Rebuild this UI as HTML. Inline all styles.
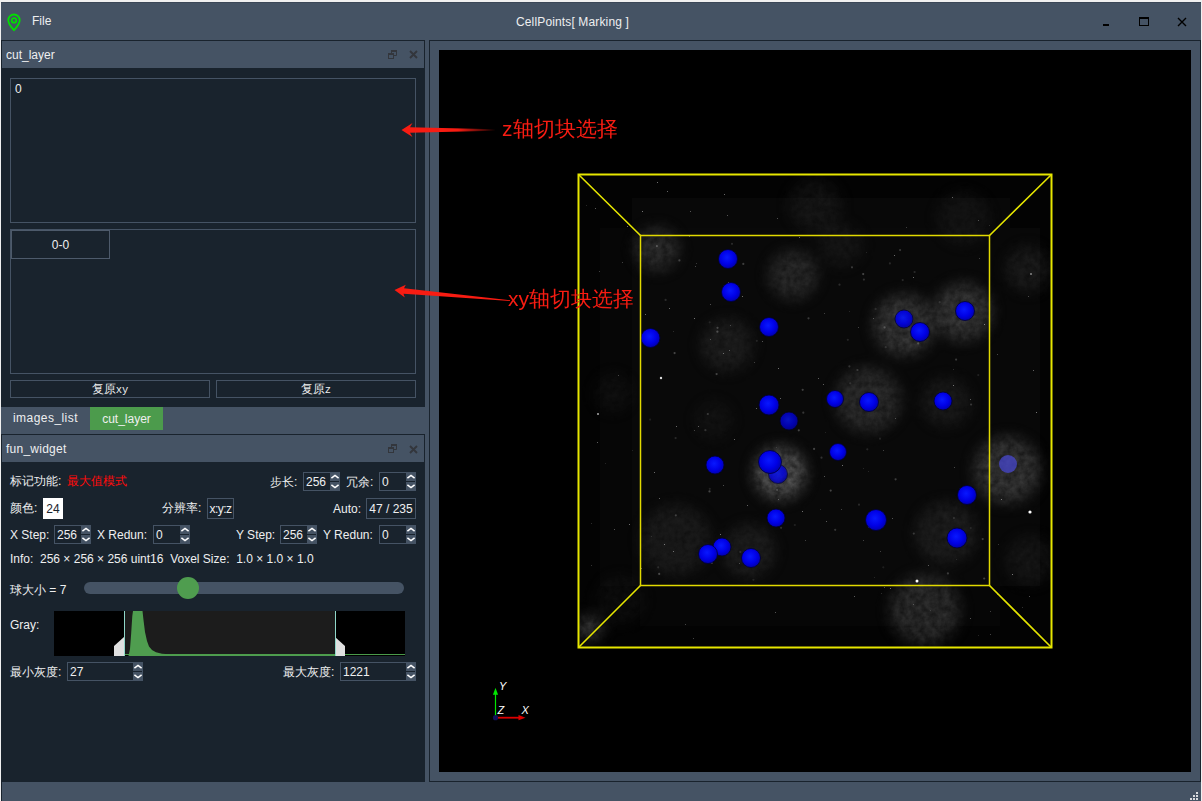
<!DOCTYPE html>
<html><head><meta charset="utf-8">
<style>
*{margin:0;padding:0;box-sizing:border-box}
html,body{width:1202px;height:801px;overflow:hidden;background:#f0f0f0}
body{position:relative;font-family:"Liberation Sans",sans-serif;font-size:12px;color:#eeeff0}
.a{position:absolute}
.t{position:absolute;white-space:nowrap;line-height:14px}
.bx{position:absolute;border:1px solid #455364}
.spin{position:absolute;border:1px solid #455364;background:#19232d}
.spin .btn{position:absolute;right:-1px;top:-1px;bottom:-1px;width:10px;background:#455364}
.spin .v{position:absolute;left:2px;top:2px;line-height:14px}
</style></head><body>
<!-- window frame -->
<div class="a" style="left:1px;top:2px;width:1200px;height:799px;background:#455364"></div>
<div class="a" style="left:1px;top:2px;width:1200px;height:1px;background:#3b4757"></div>
<div class="a" style="left:1px;top:40px;width:1px;height:367px;background:#19232d"></div><div class="a" style="left:1px;top:434px;width:1px;height:367px;background:#19232d"></div>

<!-- title bar -->
<svg class="a" style="left:6px;top:12px" width="17" height="20" viewBox="0 0 17 20">
  <path d="M8 18.3 C7 17 2.3 12.5 2.3 8.2 A5.7 5.7 0 0 1 13.7 8.2 C13.7 12.5 9 17 8 18.3 Z" fill="none" stroke="#00e000" stroke-width="1.8" stroke-linejoin="round"/>
  <circle cx="8" cy="8.4" r="2.3" fill="none" stroke="#00e000" stroke-width="1.7"/>
</svg>
<div class="t" style="left:32px;top:14px">File</div>
<div class="t" style="left:516px;top:15px;letter-spacing:0.14px">CellPoints[ Marking ]</div>
<div class="a" style="left:1103px;top:24px;width:6px;height:2px;background:#000"></div>
<div class="a" style="left:1139px;top:17px;width:10px;height:9px;border:1px solid #000;border-top-width:2px"></div>
<svg class="a" style="left:1177px;top:17px" width="10" height="10" viewBox="0 0 10 10"><path d="M1 1 L9 9 M9 1 L1 9" stroke="#000" stroke-width="1.4"/></svg>

<!-- left dock cut_layer -->
<div class="a" style="left:1px;top:40px;width:424px;height:367px;background:#19232d"></div>
<div class="a" style="left:2px;top:41px;width:422px;height:27px;background:#455364"></div>
<div class="t" style="left:6px;top:48px">cut_layer</div>
<svg class="a" style="left:388px;top:50px" width="9" height="9" viewBox="0 0 9 9"><path d="M3.5 3V.5h5v5H6" fill="none" stroke="#33363c" stroke-width="1"/><rect x="3" y="0" width="6" height="2" fill="#33363c"/><rect x=".5" y="3.5" width="5" height="5" fill="none" stroke="#33363c" stroke-width="1"/><rect x="0" y="3" width="6" height="2" fill="#33363c"/></svg>
<svg class="a" style="left:409px;top:50px" width="9" height="9" viewBox="0 0 9 9"><path d="M1 1L8 8M8 1L1 8" stroke="#33363c" stroke-width="1.9"/></svg>

<div class="bx" style="left:10px;top:78px;width:406px;height:145px"></div>
<div class="t" style="left:15px;top:82px">0</div>
<div class="bx" style="left:10px;top:229px;width:406px;height:145px"></div>
<div class="bx" style="left:11px;top:230px;width:99px;height:29px;border-color:#4d5a6b"></div>
<div class="t" style="left:11px;top:238px;width:99px;text-align:center">0-0</div>
<div class="bx" style="left:10px;top:380px;width:200px;height:18px"></div>
<div class="t" style="left:10px;top:382px;width:200px;text-align:center">复原<span style="font-family:'Liberation Mono',monospace;font-size:10.5px">xy</span></div>
<div class="bx" style="left:216px;top:380px;width:200px;height:18px"></div>
<div class="t" style="left:216px;top:382px;width:200px;text-align:center">复原<span style="font-family:'Liberation Mono',monospace;font-size:10.5px">z</span></div>

<!-- tab bar -->
<div class="t" style="left:13px;top:411px;letter-spacing:0.45px">images_list</div>
<div class="a" style="left:90px;top:407px;width:73px;height:23px;background:#4c9b4c"></div>
<div class="t" style="left:90px;top:412px;width:73px;text-align:center">cut_layer</div>

<!-- fun_widget dock -->
<div class="a" style="left:1px;top:434px;width:424px;height:348px;background:#19232d"></div>
<div class="a" style="left:2px;top:435px;width:422px;height:27px;background:#455364"></div>
<div class="t" style="left:6px;top:442px;letter-spacing:0.25px">fun_widget</div>
<svg class="a" style="left:388px;top:444px" width="9" height="9" viewBox="0 0 9 9"><path d="M3.5 3V.5h5v5H6" fill="none" stroke="#33363c" stroke-width="1"/><rect x="3" y="0" width="6" height="2" fill="#33363c"/><rect x=".5" y="3.5" width="5" height="5" fill="none" stroke="#33363c" stroke-width="1"/><rect x="0" y="3" width="6" height="2" fill="#33363c"/></svg>
<svg class="a" style="left:409px;top:445px" width="9" height="9" viewBox="0 0 9 9"><path d="M1 1L8 8M8 1L1 8" stroke="#33363c" stroke-width="1.9"/></svg>


<!-- fun content -->
<div class="t" style="left:10px;top:474px">标记功能:</div>
<div class="t" style="left:67px;top:474px;color:#ff0a0a">最大值模式</div>
<div class="t" style="left:270px;top:475px">步长:</div>
<div class="spin" style="left:303px;top:472px;width:37px;height:19px"><div class="v">256</div><div class="btn"><svg width="10" height="19" viewBox="0 0 10 19" style="position:absolute;left:0;top:0"><path d="M1.4 6.2L5 3.4L8.6 6.2" fill="none" stroke="#fff" stroke-width="1.5"/><rect x="0" y="9" width="9" height="1" fill="#19232d"/><path d="M1.4 12.8L5 15.6L8.6 12.8" fill="none" stroke="#fff" stroke-width="1.5"/></svg></div></div>
<div class="t" style="left:346px;top:475px">冗余:</div>
<div class="spin" style="left:379px;top:472px;width:37px;height:19px"><div class="v">0</div><div class="btn"><svg width="10" height="19" viewBox="0 0 10 19" style="position:absolute;left:0;top:0"><path d="M1.4 6.2L5 3.4L8.6 6.2" fill="none" stroke="#fff" stroke-width="1.5"/><rect x="0" y="9" width="9" height="1" fill="#19232d"/><path d="M1.4 12.8L5 15.6L8.6 12.8" fill="none" stroke="#fff" stroke-width="1.5"/></svg></div></div>

<div class="t" style="left:10px;top:501px">颜色:</div>
<div class="a" style="left:43px;top:498px;width:20px;height:21px;background:#fff"></div>
<div class="t" style="left:43px;top:502px;width:20px;text-align:center;color:#19232d">24</div>
<div class="t" style="left:162px;top:501px">分辨率:</div>
<div class="bx" style="left:207px;top:498px;width:27px;height:21px"></div>
<div class="t" style="left:207px;top:502px;width:27px;text-align:center;letter-spacing:-0.5px">x:y:z</div>
<div class="t" style="left:333px;top:502px">Auto:</div>
<div class="bx" style="left:366px;top:498px;width:50px;height:21px"></div>
<div class="t" style="left:366px;top:502px;width:50px;text-align:center">47 / 235</div>

<div class="t" style="left:10px;top:528px">X Step:</div>
<div class="spin" style="left:54px;top:525px;width:37px;height:19px"><div class="v">256</div><div class="btn"><svg width="10" height="19" viewBox="0 0 10 19" style="position:absolute;left:0;top:0"><path d="M1.4 6.2L5 3.4L8.6 6.2" fill="none" stroke="#fff" stroke-width="1.5"/><rect x="0" y="9" width="9" height="1" fill="#19232d"/><path d="M1.4 12.8L5 15.6L8.6 12.8" fill="none" stroke="#fff" stroke-width="1.5"/></svg></div></div>
<div class="t" style="left:97px;top:528px">X Redun:</div>
<div class="spin" style="left:153px;top:525px;width:37px;height:19px"><div class="v">0</div><div class="btn"><svg width="10" height="19" viewBox="0 0 10 19" style="position:absolute;left:0;top:0"><path d="M1.4 6.2L5 3.4L8.6 6.2" fill="none" stroke="#fff" stroke-width="1.5"/><rect x="0" y="9" width="9" height="1" fill="#19232d"/><path d="M1.4 12.8L5 15.6L8.6 12.8" fill="none" stroke="#fff" stroke-width="1.5"/></svg></div></div>
<div class="t" style="left:236px;top:528px">Y Step:</div>
<div class="spin" style="left:280px;top:525px;width:37px;height:19px"><div class="v">256</div><div class="btn"><svg width="10" height="19" viewBox="0 0 10 19" style="position:absolute;left:0;top:0"><path d="M1.4 6.2L5 3.4L8.6 6.2" fill="none" stroke="#fff" stroke-width="1.5"/><rect x="0" y="9" width="9" height="1" fill="#19232d"/><path d="M1.4 12.8L5 15.6L8.6 12.8" fill="none" stroke="#fff" stroke-width="1.5"/></svg></div></div>
<div class="t" style="left:323px;top:528px">Y Redun:</div>
<div class="spin" style="left:379px;top:525px;width:37px;height:19px"><div class="v">0</div><div class="btn"><svg width="10" height="19" viewBox="0 0 10 19" style="position:absolute;left:0;top:0"><path d="M1.4 6.2L5 3.4L8.6 6.2" fill="none" stroke="#fff" stroke-width="1.5"/><rect x="0" y="9" width="9" height="1" fill="#19232d"/><path d="M1.4 12.8L5 15.6L8.6 12.8" fill="none" stroke="#fff" stroke-width="1.5"/></svg></div></div>

<div class="t" style="left:10px;top:552px">Info:&nbsp; 256 × 256 × 256 uint16&nbsp; Voxel Size:&nbsp; 1.0 × 1.0 × 1.0</div>

<div class="t" style="left:10px;top:583px">球大小 = 7</div>
<div class="a" style="left:84px;top:582px;width:320px;height:12px;border-radius:6px;background:#455364"></div>
<div class="a" style="left:177px;top:577px;width:22px;height:22px;border-radius:50%;background:#4f9d4f"></div>

<div class="t" style="left:10px;top:618px">Gray:</div>
<svg class="a" style="left:54px;top:611px" width="351" height="45" viewBox="0 0 351 45">
  <rect x="0" y="0" width="351" height="45" fill="#000"/>
  <rect x="71" y="0" width="210" height="45" fill="#1c1c1c"/>
  <path d="M71 43.5 L351 43.5" stroke="#4a9a4a" stroke-width="1"/><rect x="0" y="44" width="351" height="1" fill="#000"/>
  <path d="M74.5 45 L76 38 L77.2 22 L78.3 5 L79 0 L88.5 0 L89.5 9 L91 21 L93 30 L95 35.5 L98 39 L102 41.3 L108 42.7 L118 43.4 L281 43.6 L281 45 L73 45 Z" fill="#4f9d4f"/>
  <path d="M60 45 L60 35 L70 26 L70 45 Z" fill="#e0e0e0"/>
  <rect x="70" y="0" width="1" height="45" fill="#8fd6c8"/>
  <path d="M281 26 L291 35 L291 45 L281 45 Z" fill="#e0e0e0"/>
  <rect x="281" y="0" width="1" height="45" fill="#8fd6c8"/>
</svg>

<div class="t" style="left:10px;top:665px">最小灰度:</div>
<div class="spin" style="left:67px;top:662px;width:76px;height:19px"><div class="v">27</div><div class="btn"><svg width="10" height="19" viewBox="0 0 10 19" style="position:absolute;left:0;top:0"><path d="M1.4 6.2L5 3.4L8.6 6.2" fill="none" stroke="#fff" stroke-width="1.5"/><rect x="0" y="9" width="9" height="1" fill="#19232d"/><path d="M1.4 12.8L5 15.6L8.6 12.8" fill="none" stroke="#fff" stroke-width="1.5"/></svg></div></div>
<div class="t" style="left:283px;top:665px">最大灰度:</div>
<div class="spin" style="left:340px;top:662px;width:76px;height:19px"><div class="v">1221</div><div class="btn"><svg width="10" height="19" viewBox="0 0 10 19" style="position:absolute;left:0;top:0"><path d="M1.4 6.2L5 3.4L8.6 6.2" fill="none" stroke="#fff" stroke-width="1.5"/><rect x="0" y="9" width="9" height="1" fill="#19232d"/><path d="M1.4 12.8L5 15.6L8.6 12.8" fill="none" stroke="#fff" stroke-width="1.5"/></svg></div></div>


<!-- right panel -->
<div class="a" style="left:429px;top:40px;width:772px;height:742px;background:#19232d"></div>
<div class="a" style="left:430px;top:41px;width:770px;height:740px;background:#455364"></div>
<div class="a" style="left:439px;top:50px;width:752px;height:722px;background:#000;overflow:hidden">
  <svg width="752" height="722" viewBox="439 50 752 722" style="position:absolute;left:0;top:0">
<defs>
<radialGradient id="sg" cx="45%" cy="42%" r="60%"><stop offset="0" stop-color="#0818ff"/><stop offset="0.6" stop-color="#0000e6"/><stop offset="1" stop-color="#0000a8"/></radialGradient>
<filter id="bf" x="579" y="175" width="472" height="472" filterUnits="userSpaceOnUse">
<feGaussianBlur in="SourceGraphic" stdDeviation="7" result="b"/>
<feTurbulence type="fractalNoise" baseFrequency="0.16" numOctaves="3" seed="4" result="n"/>
<feColorMatrix in="n" type="matrix" values="0 0 0 0 1  0 0 0 0 1  0 0 0 0 1  0.75 0 0 0 0.25" result="na"/>
<feComposite in="b" in2="na" operator="in"/>
</filter>
</defs>
<rect x="579" y="175" width="472" height="472" fill="#030303"/>
<rect x="632" y="198" width="378" height="37" fill="#080808"/><rect x="600" y="228" width="40" height="358" fill="#060606"/><rect x="990" y="228" width="50" height="358" fill="#080808"/><rect x="640" y="586" width="360" height="40" fill="#060606"/>
<rect x="632" y="228" width="358" height="358" fill="#090909"/>
<g filter="url(#bf)"><circle cx="657" cy="249" r="22.0" fill="#989898" opacity="0.30"/><circle cx="793" cy="275" r="24.6" fill="#989898" opacity="0.28"/><circle cx="815" cy="205" r="26.4" fill="#989898" opacity="0.12"/><circle cx="904" cy="325" r="30.8" fill="#989898" opacity="0.38"/><circle cx="963" cy="312" r="29.0" fill="#989898" opacity="0.38"/><circle cx="1028" cy="269" r="22.9" fill="#989898" opacity="0.16"/><circle cx="727" cy="345" r="26.4" fill="#989898" opacity="0.18"/><circle cx="868" cy="400" r="32.6" fill="#989898" opacity="0.30"/><circle cx="780" cy="473" r="26.4" fill="#989898" opacity="0.62"/><circle cx="1007" cy="470" r="33.4" fill="#989898" opacity="0.38"/><circle cx="946" cy="402" r="24.6" fill="#989898" opacity="0.14"/><circle cx="676" cy="540" r="35.2" fill="#989898" opacity="0.16"/><circle cx="749" cy="551" r="26.4" fill="#989898" opacity="0.18"/><circle cx="946" cy="533" r="30.8" fill="#989898" opacity="0.18"/><circle cx="925" cy="610" r="35.2" fill="#989898" opacity="0.32"/><circle cx="613" cy="393" r="19.4" fill="#989898" opacity="0.08"/><circle cx="714" cy="420" r="19.4" fill="#989898" opacity="0.08"/><circle cx="841" cy="245" r="22.0" fill="#989898" opacity="0.10"/><circle cx="963" cy="218" r="26.4" fill="#989898" opacity="0.10"/><circle cx="1030" cy="560" r="24.6" fill="#989898" opacity="0.11"/><circle cx="620" cy="600" r="24.6" fill="#989898" opacity="0.08"/><circle cx="590" cy="628" r="12.3" fill="#989898" opacity="0.45"/></g>
<rect x="694" y="430" width="1" height="1" fill="#fff" opacity="0.23"/><rect x="863" y="468" width="1" height="1" fill="#fff" opacity="0.12"/><rect x="591" y="565" width="1" height="1" fill="#fff" opacity="0.19"/><rect x="693" y="638" width="1" height="1" fill="#fff" opacity="0.26"/><rect x="970" y="399" width="1" height="1" fill="#fff" opacity="0.32"/><rect x="654" y="472" width="1" height="1" fill="#fff" opacity="0.40"/><rect x="826" y="521" width="1" height="1" fill="#fff" opacity="0.33"/><rect x="614" y="529" width="1" height="1" fill="#fff" opacity="0.31"/><rect x="724" y="194" width="1" height="1" fill="#fff" opacity="0.40"/><rect x="802" y="511" width="1" height="1" fill="#fff" opacity="0.41"/><rect x="913" y="604" width="1" height="1" fill="#fff" opacity="0.24"/><rect x="953" y="385" width="1" height="1" fill="#fff" opacity="0.43"/><rect x="989" y="225" width="1" height="1" fill="#fff" opacity="0.15"/><rect x="685" y="624" width="1" height="1" fill="#fff" opacity="0.25"/><rect x="873" y="318" width="1" height="1" fill="#fff" opacity="0.28"/><rect x="762" y="341" width="1" height="1" fill="#fff" opacity="0.30"/><rect x="854" y="596" width="1" height="1" fill="#fff" opacity="0.34"/><rect x="1012" y="574" width="1" height="1" fill="#fff" opacity="0.45"/><rect x="894" y="255" width="1" height="1" fill="#fff" opacity="0.40"/><rect x="1029" y="596" width="1" height="1" fill="#fff" opacity="0.30"/><rect x="913" y="277" width="1" height="1" fill="#fff" opacity="0.39"/><rect x="849" y="311" width="1" height="1" fill="#fff" opacity="0.12"/><rect x="978" y="635" width="1" height="1" fill="#fff" opacity="0.13"/><rect x="953" y="369" width="1" height="1" fill="#fff" opacity="0.15"/><rect x="720" y="534" width="1" height="1" fill="#fff" opacity="0.41"/><rect x="605" y="463" width="1" height="1" fill="#fff" opacity="0.12"/><rect x="915" y="332" width="1" height="1" fill="#fff" opacity="0.41"/><rect x="1036" y="412" width="1" height="1" fill="#fff" opacity="0.45"/><rect x="727" y="215" width="1" height="1" fill="#fff" opacity="0.31"/><rect x="599" y="271" width="1" height="1" fill="#fff" opacity="0.24"/><rect x="866" y="252" width="1" height="1" fill="#fff" opacity="0.11"/><rect x="984" y="324" width="1" height="1" fill="#fff" opacity="0.44"/><rect x="997" y="354" width="1" height="1" fill="#fff" opacity="0.26"/><rect x="824" y="476" width="1" height="1" fill="#fff" opacity="0.31"/><rect x="842" y="465" width="1" height="1" fill="#fff" opacity="0.43"/><rect x="818" y="378" width="1" height="1" fill="#fff" opacity="0.35"/><rect x="694" y="318" width="1" height="1" fill="#fff" opacity="0.44"/><rect x="825" y="432" width="1" height="1" fill="#fff" opacity="0.10"/><rect x="776" y="447" width="1" height="1" fill="#fff" opacity="0.11"/><rect x="868" y="471" width="1" height="1" fill="#fff" opacity="0.12"/><rect x="874" y="394" width="1" height="1" fill="#fff" opacity="0.34"/><rect x="747" y="505" width="1" height="1" fill="#fff" opacity="0.36"/><rect x="595" y="208" width="1" height="1" fill="#fff" opacity="0.34"/><rect x="1028" y="296" width="1" height="1" fill="#fff" opacity="0.26"/><rect x="858" y="327" width="1" height="1" fill="#fff" opacity="0.23"/><rect x="729" y="350" width="1" height="1" fill="#fff" opacity="0.31"/><rect x="723" y="353" width="1" height="1" fill="#fff" opacity="0.37"/><rect x="597" y="442" width="1" height="1" fill="#fff" opacity="0.36"/><rect x="728" y="282" width="1" height="1" fill="#fff" opacity="0.38"/><rect x="695" y="266" width="1" height="1" fill="#fff" opacity="0.25"/><rect x="906" y="227" width="1" height="1" fill="#fff" opacity="0.21"/><rect x="739" y="563" width="1" height="1" fill="#fff" opacity="0.25"/><rect x="979" y="258" width="1" height="1" fill="#fff" opacity="0.22"/><rect x="884" y="587" width="1" height="1" fill="#fff" opacity="0.26"/><rect x="689" y="236" width="1" height="1" fill="#fff" opacity="0.29"/><rect x="673" y="551" width="1" height="1" fill="#fff" opacity="0.39"/><rect x="669" y="308" width="1" height="1" fill="#fff" opacity="0.38"/><rect x="880" y="551" width="1" height="1" fill="#fff" opacity="0.22"/><rect x="645" y="314" width="1" height="1" fill="#fff" opacity="0.38"/><rect x="710" y="339" width="1" height="1" fill="#fff" opacity="0.25"/><rect x="778" y="368" width="1" height="1" fill="#fff" opacity="0.42"/><rect x="657" y="182" width="1" height="1" fill="#fff" opacity="0.43"/><rect x="990" y="634" width="1" height="1" fill="#fff" opacity="0.25"/><rect x="1022" y="607" width="1" height="1" fill="#fff" opacity="0.18"/><rect x="928" y="565" width="1" height="1" fill="#fff" opacity="0.33"/><rect x="824" y="313" width="1" height="1" fill="#fff" opacity="0.22"/><rect x="690" y="211" width="1" height="1" fill="#fff" opacity="0.31"/><rect x="717" y="553" width="1" height="1" fill="#fff" opacity="0.12"/><rect x="1001" y="499" width="1" height="1" fill="#fff" opacity="0.42"/><rect x="997" y="594" width="1" height="1" fill="#fff" opacity="0.30"/><rect x="591" y="523" width="1" height="1" fill="#fff" opacity="0.16"/><rect x="723" y="485" width="1" height="1" fill="#fff" opacity="0.28"/><rect x="775" y="612" width="1" height="1" fill="#fff" opacity="0.31"/><rect x="742" y="296" width="1" height="1" fill="#fff" opacity="0.40"/><rect x="805" y="540" width="1" height="1" fill="#fff" opacity="0.22"/><rect x="676" y="426" width="1" height="1" fill="#fff" opacity="0.39"/><rect x="664" y="544" width="1" height="1" fill="#fff" opacity="0.42"/><rect x="956" y="559" width="1" height="1" fill="#fff" opacity="0.10"/><rect x="874" y="577" width="1" height="1" fill="#fff" opacity="0.12"/><rect x="710" y="304" width="1" height="1" fill="#fff" opacity="0.28"/><rect x="780" y="398" width="1" height="1" fill="#fff" opacity="0.37"/><rect x="586" y="205" width="1" height="1" fill="#fff" opacity="0.14"/><rect x="642" y="211" width="1" height="1" fill="#fff" opacity="0.44"/><rect x="978" y="220" width="1" height="1" fill="#fff" opacity="0.28"/><rect x="730" y="325" width="1" height="1" fill="#fff" opacity="0.22"/><rect x="883" y="450" width="1" height="1" fill="#fff" opacity="0.23"/><rect x="673" y="331" width="1" height="1" fill="#fff" opacity="0.14"/><rect x="841" y="509" width="1" height="1" fill="#fff" opacity="0.23"/><rect x="622" y="262" width="1" height="1" fill="#fff" opacity="0.23"/><rect x="863" y="540" width="1" height="1" fill="#fff" opacity="0.23"/><rect x="954" y="467" width="1" height="1" fill="#fff" opacity="0.25"/><rect x="756" y="408" width="1" height="1" fill="#fff" opacity="0.35"/><rect x="778" y="499" width="1" height="1" fill="#fff" opacity="0.26"/><rect x="698" y="426" width="1" height="1" fill="#fff" opacity="0.34"/><rect x="618" y="375" width="1" height="1" fill="#fff" opacity="0.25"/><rect x="990" y="611" width="1" height="1" fill="#fff" opacity="0.23"/><rect x="998" y="544" width="1" height="1" fill="#fff" opacity="0.19"/><rect x="799" y="237" width="1" height="1" fill="#fff" opacity="0.38"/><rect x="890" y="588" width="1" height="1" fill="#fff" opacity="0.38"/><rect x="892" y="518" width="1" height="1" fill="#fff" opacity="0.30"/><rect x="632" y="450" width="1" height="1" fill="#fff" opacity="0.10"/><rect x="651" y="536" width="1" height="1" fill="#fff" opacity="0.12"/><rect x="627" y="226" width="1" height="1" fill="#fff" opacity="0.41"/><rect x="667" y="191" width="1" height="1" fill="#fff" opacity="0.39"/><rect x="641" y="568" width="1" height="1" fill="#fff" opacity="0.34"/><rect x="970" y="618" width="1" height="1" fill="#fff" opacity="0.30"/><rect x="952" y="197" width="1" height="1" fill="#fff" opacity="0.37"/><rect x="820" y="509" width="1" height="1" fill="#fff" opacity="0.14"/><rect x="930" y="610" width="1" height="1" fill="#fff" opacity="0.12"/><rect x="734" y="439" width="1" height="1" fill="#fff" opacity="0.39"/><rect x="696" y="263" width="1" height="1" fill="#fff" opacity="0.19"/><rect x="868" y="527" width="1" height="1" fill="#fff" opacity="0.24"/><rect x="754" y="362" width="1" height="1" fill="#fff" opacity="0.22"/><rect x="777" y="218" width="1" height="1" fill="#fff" opacity="0.28"/><rect x="1033" y="370" width="1" height="1" fill="#fff" opacity="0.36"/><rect x="659" y="498" width="1" height="1" fill="#fff" opacity="0.36"/><rect x="895" y="418" width="1" height="1" fill="#fff" opacity="0.27"/><rect x="881" y="593" width="1" height="1" fill="#fff" opacity="0.15"/><rect x="629" y="524" width="1" height="1" fill="#fff" opacity="0.42"/><rect x="823" y="384" width="1" height="1" fill="#fff" opacity="0.35"/><circle cx="798.8" cy="430.3" r="1.1" fill="#bbb" opacity="0.33"/><circle cx="803.3" cy="412.7" r="1.1" fill="#bbb" opacity="0.26"/><circle cx="707.8" cy="414.0" r="1.1" fill="#bbb" opacity="0.26"/><circle cx="914.6" cy="272.0" r="1.1" fill="#bbb" opacity="0.19"/><circle cx="675.8" cy="515.3" r="1.1" fill="#bbb" opacity="0.28"/><circle cx="659.2" cy="573.9" r="1.1" fill="#bbb" opacity="0.34"/><circle cx="867.3" cy="449.3" r="1.1" fill="#bbb" opacity="0.16"/><circle cx="650.1" cy="419.6" r="1.1" fill="#bbb" opacity="0.13"/><circle cx="709.7" cy="322.3" r="1.1" fill="#bbb" opacity="0.13"/><circle cx="802.7" cy="389.8" r="1.1" fill="#bbb" opacity="0.31"/><circle cx="821.5" cy="457.7" r="1.1" fill="#bbb" opacity="0.23"/><circle cx="870.2" cy="395.5" r="1.1" fill="#bbb" opacity="0.18"/><circle cx="984.2" cy="578.5" r="1.1" fill="#bbb" opacity="0.31"/><circle cx="885.7" cy="347.2" r="1.1" fill="#bbb" opacity="0.17"/><circle cx="743.3" cy="263.9" r="1.1" fill="#bbb" opacity="0.30"/><circle cx="781.1" cy="527.8" r="1.1" fill="#bbb" opacity="0.21"/><circle cx="970.7" cy="528.1" r="1.1" fill="#bbb" opacity="0.12"/><circle cx="716.3" cy="549.5" r="1.1" fill="#bbb" opacity="0.23"/><circle cx="978.3" cy="375.1" r="1.1" fill="#bbb" opacity="0.14"/><circle cx="859.0" cy="504.7" r="1.1" fill="#bbb" opacity="0.18"/><circle cx="674.6" cy="353.1" r="1.1" fill="#bbb" opacity="0.34"/><circle cx="902.7" cy="280.1" r="1.1" fill="#bbb" opacity="0.18"/><circle cx="679.4" cy="260.4" r="1.1" fill="#bbb" opacity="0.30"/><circle cx="705.4" cy="430.2" r="1.1" fill="#bbb" opacity="0.22"/><circle cx="709.8" cy="488.8" r="1.1" fill="#bbb" opacity="0.15"/><circle cx="863.9" cy="279.6" r="1.1" fill="#bbb" opacity="0.22"/><circle cx="717.4" cy="331.7" r="1.1" fill="#bbb" opacity="0.34"/><circle cx="918.2" cy="343.4" r="1.1" fill="#bbb" opacity="0.32"/><circle cx="716.6" cy="374.1" r="1.1" fill="#bbb" opacity="0.32"/><circle cx="863.2" cy="274.1" r="1.1" fill="#bbb" opacity="0.35"/><circle cx="717.5" cy="327.8" r="1.1" fill="#bbb" opacity="0.30"/><circle cx="756.8" cy="340.8" r="1.1" fill="#bbb" opacity="0.14"/><circle cx="675.6" cy="438.1" r="1.1" fill="#bbb" opacity="0.18"/><circle cx="849.4" cy="366.4" r="1.1" fill="#bbb" opacity="0.22"/><circle cx="971.1" cy="404.5" r="1.1" fill="#bbb" opacity="0.25"/><circle cx="939.6" cy="302.2" r="1.1" fill="#bbb" opacity="0.16"/><circle cx="953.9" cy="518.1" r="1.1" fill="#bbb" opacity="0.18"/><circle cx="709.5" cy="491.4" r="1.1" fill="#bbb" opacity="0.34"/><circle cx="711.8" cy="563.0" r="1.1" fill="#bbb" opacity="0.32"/><circle cx="850.2" cy="383.3" r="1.1" fill="#bbb" opacity="0.14"/><circle cx="658.2" cy="567.3" r="1.1" fill="#bbb" opacity="0.17"/><circle cx="884.6" cy="327.4" r="1.1" fill="#bbb" opacity="0.31"/><circle cx="847.8" cy="339.8" r="1.1" fill="#bbb" opacity="0.16"/><circle cx="889.9" cy="263.4" r="1.1" fill="#bbb" opacity="0.17"/><circle cx="835.2" cy="529.8" r="1.1" fill="#bbb" opacity="0.26"/><circle cx="740.3" cy="551.9" r="1.1" fill="#bbb" opacity="0.17"/><circle cx="650.6" cy="331.5" r="1.1" fill="#bbb" opacity="0.22"/><circle cx="665.6" cy="299.9" r="1.1" fill="#bbb" opacity="0.20"/><circle cx="839.5" cy="284.7" r="1.1" fill="#bbb" opacity="0.20"/><circle cx="947.9" cy="573.4" r="1.1" fill="#bbb" opacity="0.27"/><circle cx="880.0" cy="438.7" r="1.1" fill="#bbb" opacity="0.15"/><circle cx="656.9" cy="246.1" r="1.1" fill="#bbb" opacity="0.33"/><circle cx="883.3" cy="567.3" r="1.1" fill="#bbb" opacity="0.12"/><circle cx="861.3" cy="404.0" r="1.1" fill="#bbb" opacity="0.29"/><circle cx="753.4" cy="579.8" r="1.1" fill="#bbb" opacity="0.14"/><circle cx="830.7" cy="490.6" r="1.1" fill="#bbb" opacity="0.33"/><circle cx="895.6" cy="479.3" r="1.1" fill="#bbb" opacity="0.30"/><circle cx="956.1" cy="359.6" r="1.1" fill="#bbb" opacity="0.28"/><circle cx="951.3" cy="536.2" r="1.1" fill="#bbb" opacity="0.22"/><circle cx="913.8" cy="533.6" r="1.1" fill="#bbb" opacity="0.25"/><circle cx="857.5" cy="370.0" r="1.1" fill="#bbb" opacity="0.25"/><circle cx="852.0" cy="267.3" r="1.1" fill="#bbb" opacity="0.27"/><circle cx="982.7" cy="539.1" r="1.1" fill="#bbb" opacity="0.29"/><circle cx="777.1" cy="489.9" r="1.1" fill="#bbb" opacity="0.25"/><circle cx="794.8" cy="525.0" r="1.1" fill="#bbb" opacity="0.14"/><circle cx="900.1" cy="250.1" r="1.1" fill="#bbb" opacity="0.26"/><circle cx="808.5" cy="318.3" r="1.1" fill="#bbb" opacity="0.28"/><circle cx="814.1" cy="448.9" r="1.1" fill="#bbb" opacity="0.33"/><circle cx="732.0" cy="243.8" r="1.1" fill="#bbb" opacity="0.19"/><circle cx="875.6" cy="308.9" r="1.1" fill="#bbb" opacity="0.16"/><circle cx="917" cy="581" r="1.5" fill="#fff"/><circle cx="1030" cy="512" r="1.6" fill="#fff"/><circle cx="661" cy="378" r="1.2" fill="#ddd"/><circle cx="598" cy="414" r="1" fill="#aaa"/><circle cx="1031" cy="274" r="1" fill="#888"/>
<circle cx="728" cy="259" r="9.5" fill="url(#sg)" stroke="#000038" stroke-width="0.8" opacity="1"/><circle cx="731" cy="292" r="9.5" fill="url(#sg)" stroke="#000038" stroke-width="0.8" opacity="1"/><circle cx="769" cy="327" r="9.5" fill="url(#sg)" stroke="#000038" stroke-width="0.8" opacity="1"/><circle cx="650.5" cy="338" r="9.5" fill="url(#sg)" stroke="#000038" stroke-width="0.8" opacity="1"/><circle cx="769" cy="405" r="10" fill="url(#sg)" stroke="#000038" stroke-width="0.8" opacity="1"/><circle cx="904" cy="319" r="9" fill="url(#sg)" stroke="#000038" stroke-width="0.8" opacity="0.9"/><circle cx="920" cy="332" r="9.5" fill="url(#sg)" stroke="#000038" stroke-width="0.8" opacity="1"/><circle cx="965" cy="311" r="9.5" fill="url(#sg)" stroke="#000038" stroke-width="0.8" opacity="1"/><circle cx="835" cy="399" r="8.5" fill="url(#sg)" stroke="#000038" stroke-width="0.8" opacity="1"/><circle cx="869" cy="402" r="9.5" fill="url(#sg)" stroke="#000038" stroke-width="0.8" opacity="1"/><circle cx="943" cy="401" r="9" fill="url(#sg)" stroke="#000038" stroke-width="0.8" opacity="1"/><circle cx="715" cy="465" r="9" fill="url(#sg)" stroke="#000038" stroke-width="0.8" opacity="1"/><circle cx="778" cy="474" r="9.5" fill="url(#sg)" stroke="#000038" stroke-width="0.8" opacity="0.8"/><circle cx="770" cy="462" r="11.5" fill="url(#sg)" stroke="#000038" stroke-width="0.8" opacity="1"/><circle cx="776" cy="518" r="9" fill="url(#sg)" stroke="#000038" stroke-width="0.8" opacity="1"/><circle cx="722" cy="547" r="9" fill="url(#sg)" stroke="#000038" stroke-width="0.8" opacity="1"/><circle cx="708" cy="554" r="9.5" fill="url(#sg)" stroke="#000038" stroke-width="0.8" opacity="1"/><circle cx="751" cy="558" r="9.5" fill="url(#sg)" stroke="#000038" stroke-width="0.8" opacity="1"/><circle cx="789" cy="421" r="9" fill="url(#sg)" stroke="#000038" stroke-width="0.8" opacity="0.75"/><circle cx="838" cy="452" r="8.5" fill="url(#sg)" stroke="#000038" stroke-width="0.8" opacity="1"/><circle cx="876" cy="520" r="10.5" fill="url(#sg)" stroke="#000038" stroke-width="0.8" opacity="1"/><circle cx="967" cy="495" r="9.5" fill="url(#sg)" stroke="#000038" stroke-width="0.8" opacity="1"/><circle cx="957" cy="538" r="10" fill="url(#sg)" stroke="#000038" stroke-width="0.8" opacity="1"/><circle cx="1008" cy="464" r="9" fill="#4848d8" opacity="0.7"/>
<g stroke="#e6e600" fill="none">
<rect x="578.5" y="174.5" width="473" height="473" stroke-width="2"/>
<path d="M578.5 174.5L640.5 235.5M1051.5 174.5L989.5 235.5M578.5 647.5L640.5 585.5M1051.5 647.5L989.5 585.5" stroke-width="1.6"/>
<rect x="640.5" y="235.5" width="349" height="350" stroke="#e2da00" stroke-width="1.5"/>
</g>
<g transform="translate(495.5,717.7)">
<path d="M0 0V-25" stroke="#00e600" stroke-width="1.2"/><path d="M-2.6 -23L0 -30L2.6 -23Z" fill="#00e600"/>
<path d="M0 0H24" stroke="#dd0000" stroke-width="1.8"/><path d="M23 -2.6L30 0L23 2.6Z" fill="#dd0000"/>
<circle cx="0" cy="0" r="2.6" fill="#10105a"/>
<text x="2" y="-4" font-size="11" font-style="italic" fill="#fff" font-family="Liberation Sans">Z</text>
<text x="3.5" y="-28" font-size="11" font-style="italic" fill="#fff" font-family="Liberation Sans">Y</text>
<text x="26" y="-4" font-size="11" font-style="italic" fill="#fff" font-family="Liberation Sans">X</text>
</g>
</svg>
</div>


<svg class="a" style="left:1189px;top:792px" width="10" height="10" viewBox="0 0 10 10"><g fill="#d8dade"><rect x="7" y="0" width="2" height="2"/><rect x="4" y="3" width="2" height="2"/><rect x="7" y="3" width="2" height="2"/><rect x="1" y="6" width="2" height="2"/><rect x="4" y="6" width="2" height="2"/><rect x="7" y="6" width="2" height="2"/></g></svg>
<!-- annotations -->
<svg class="a" style="left:0;top:0" width="1202" height="801">
<defs><linearGradient id="fade" x1="401" y1="0" x2="496" y2="0" gradientUnits="userSpaceOnUse"><stop offset="0.6" stop-color="#f81c12" stop-opacity="1"/><stop offset="1" stop-color="#f81c12" stop-opacity="0"/></linearGradient></defs>
<path d="M401.5 130L412.5 123L410 127.2L495 129.3L495 130.7L410 132.8L412.5 137Z" fill="url(#fade)"/>
<path d="M394.5 290L405.8 284.7L404 288.3L510 300.3L510 301.1L403.5 293.8L404.8 297.5Z" fill="#f81c12"/>
</svg>
<div class="t" style="left:502px;top:117px;font-size:21px;line-height:24px;color:#f81c12">z轴切块选择</div>
<div class="t" style="left:508px;top:287px;font-size:21px;line-height:24px;color:#f81c12">xy轴切块选择</div>

</body></html>
